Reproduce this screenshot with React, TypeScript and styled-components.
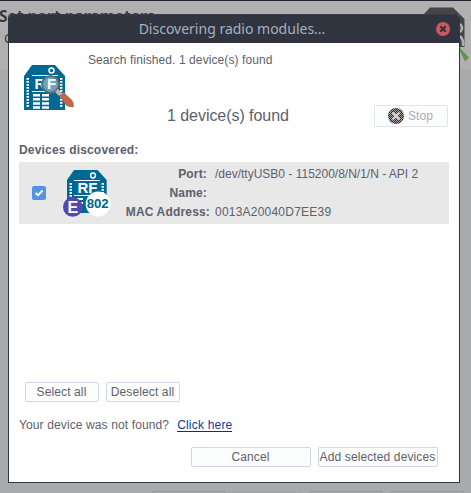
import React from "react";
import styled, { createGlobalStyle } from "styled-components";

const GlobalStyle = createGlobalStyle`
  * { box-sizing: border-box; }
  body {
    margin: 0;
    overflow: hidden;
    font: 12px/14px "Liberation Sans", Arial, sans-serif;
    letter-spacing: 0.09px;
    color: #5c616c;
  }
  svg { display: block; flex: none; letter-spacing: 0; }
`;

const Screen = styled.div`
  position: relative;
  display: flex;
  flex-direction: column;
  width: 471px;
  height: 493px;
  overflow: hidden;
  background: #a9aaac;
`;

const WizardHeader = styled.header`
  display: flex;
  justify-content: space-between;
  height: 69px;
  border-top: 1px solid #22222f;
  background: #b1b0b0;
  color: #34373d;
`;

const WizardTitle = styled.h1`
  margin: 4px 0 0 -1px;
  font: bold 15.5px/22px "Noto Sans", sans-serif;
  letter-spacing: 0;
  white-space: nowrap;
`;

const WizardHint = styled.p`
  margin: 3px 0 0 4px;
  font: 13px/16px "Noto Sans", sans-serif;
`;

const WizardFooter = styled.footer`
  display: grid;
  grid-template-columns: 76px 81px 81px 74px;
  margin: auto 0 0 152px;
  height: 2px;
`;

const FooterEdge = styled.div<{ $faint?: boolean }>`
  width: 74px;
  height: 4px;
  border: 1px solid ${(p) => (p.$faint ? "#a1a2a5" : "#929498")};
  border-radius: 2px;
`;

const Dialog = styled.section`
  position: absolute;
  left: 8px;
  top: 14px;
  width: 452px;
  height: 469px;
  display: flex;
  flex-direction: column;
  border: 1px solid #33363c;
  border-top: 0;
  border-radius: 4px 4px 0 0;
  background: #fff;
  overflow: hidden;
`;

const TitleBar = styled.div`
  display: grid;
  grid-template-columns: 24px 1fr 24px;
  flex: none;
  height: 29px;
  margin: 0 -1px;
  border-top: 1px solid #3b3d42;
  background: #2f343f;
  color: #a9b1c1;
  font: 14px/27px "Noto Sans", sans-serif;
  letter-spacing: 0;
  text-align: center;
`;

const TitleText = styled.span`
  grid-column: 2;
  margin-right: 4px;
  white-space: nowrap;
`;

const CloseButton = styled.div`
  padding-top: 7px;
`;

const Body = styled.div`
  display: flex;
  flex-direction: column;
  flex: 1;
  padding: 0 10px;
`;

const Intro = styled.div`
  display: flex;
  height: 58px;
  padding: 10px 0 0 4px;
`;

const IntroText = styled.p`
  margin: 0 0 0 13px;
`;

const IntroIcon = styled.div`
  padding-top: 12px;
`;

const StatusRow = styled.div`
  display: grid;
  grid-template-columns: 148px 1fr 74px;
  align-items: center;
  height: 30px;
  padding-right: 1px;
`;

const StatusText = styled.strong`
  font-weight: 400;
  font-size: 16px;
  line-height: 20px;
  letter-spacing: -0.05px;
`;

const Button = styled.button<{ $width: number; $muted?: boolean }>`
  display: flex;
  align-items: center;
  justify-content: center;
  gap: 4px;
  width: ${(p) => p.$width}px;
  height: ${(p) => (p.$muted ? 22 : 20)}px;
  padding: 0 1px 0 0;
  border: 1px solid ${(p) => (p.$muted ? "#e1e5ee" : "#cfd6e6")};
  border-radius: 2px;
  background: #fcfdfd;
  color: ${(p) => (p.$muted ? "#a9acb2" : "#5c616c")};
  font: 12px/14px "Liberation Sans", Arial, sans-serif;
  letter-spacing: 0.12px;
  white-space: nowrap;
`;

const SectionLabel = styled.h2`
  margin: 12px 0 5px;
  font-size: 12px;
  line-height: 14px;
  letter-spacing: 0.18px;
`;

const DeviceList = styled.div`
  height: 220px;
`;

const DeviceRow = styled.div`
  display: flex;
  height: 62px;
  background: #e8e8e8;
`;

const Check = styled.div`
  display: flex;
  align-items: center;
  justify-content: center;
  width: 14px;
  height: 14px;
  margin: 24px 17px 0 13px;
  border-radius: 2px;
  background: #5294e2;
`;

const DeviceIconSlot = styled.div`
  padding-top: 8px;
`;

const Details = styled.dl`
  display: grid;
  grid-template-columns: 99px auto;
  grid-auto-rows: 19px;
  margin: 5px 0 0;
`;

const Term = styled.dt<{ $flush?: boolean }>`
  padding-right: ${(p) => (p.$flush ? 0 : 3)}px;
  font-weight: 700;
  letter-spacing: 0.17px;
  text-align: right;
  white-space: nowrap;
`;

const Value = styled.dd<{ $spacing?: number }>`
  margin: 0 0 0 5px;
  letter-spacing: ${(p) => p.$spacing ?? 0}px;
  white-space: nowrap;
`;

const SelectionRow = styled.div`
  display: flex;
  gap: 7px;
  padding-left: 6px;
`;

const HelpRow = styled.div`
  display: flex;
  gap: 8px;
  margin-top: 16px;
  letter-spacing: 0.12px;
`;

const HelpLink = styled.a`
  height: 14px;
  color: #0a3a9c;
  letter-spacing: 0.2px;
  border-bottom: 1px solid #0a2f8c;
`;

const Actions = styled.div`
  display: flex;
  justify-content: flex-end;
  gap: 7px;
  margin-top: 15px;
  padding-right: 11px;
`;

const dots = (height: number) =>
  Array.from({ length: Math.floor(height / 3) }, (_, i) => i * 3);

const SearchModuleIcon = () => (
  <svg width="52" height="46" viewBox="0 0 52 46">
    <path d="M9 0H32L42 11V45H1V11Z" fill="#006894" />
    <circle cx="28.5" cy="5.6" r="2.5" fill="none" stroke="#fff" strokeWidth="1.5" />
    <path d="M9 10.5H35M9 26.5H22" stroke="#fff" />
    {dots(31).map((y) => (
      <path key={y} d={`M3.5 ${13 + y}h2.5v1.7H3.5zM37 ${13 + y}h2.5v1.7h-2.5z`} fill="#fff" />
    ))}
    <text x="11.5" y="24" fill="#fff" fontSize="15" fontWeight="700">R</text>
    <path d="M10 30.2h7M19 30.2h7M10 34.3h7M19 34.3h7M10 38.4h7M19 38.4h7M10 42.4h7M19 42.4h7" stroke="#fff" strokeWidth="2.5" />
    <circle cx="27.5" cy="19.3" r="8.4" fill="#69a5c2" stroke="#67696c" strokeWidth="2" />
    <text x="24" y="24.3" fill="#fff" fontSize="15" fontWeight="700">F</text>
    <path d="M33.5 25.5l4 4" stroke="#b7b9ba" strokeWidth="4" />
    <path d="M36.5 31l4-4 8.5 8q2.5 3 1.9 7-4.5.8-8-1.8Z" fill="#be694a" />
  </svg>
);

const DeviceIcon = () => (
  <svg width="48" height="49" viewBox="0 0 48 49">
    <path d="M11 0H34.5L43.7 10V43H4V10Z" fill="#006894" />
    <circle cx="30" cy="5.5" r="2.4" fill="none" stroke="#fff" strokeWidth="1.5" />
    <path d="M11 10.5H37M11 25.5H37" stroke="#fff" />
    {dots(25).map((y) => (
      <path key={y} d={`M6.5 ${13 + y}h2.5v1.7H6.5zM38.5 ${13 + y}h2.5v1.7H38.5z`} fill="#fff" />
    ))}
    <text x="14.5" y="23" fill="#fff" fontSize="15" fontWeight="700">RF</text>
    <path d="M14 29h6M14 33h6" stroke="#fff" strokeWidth="2" />
    <circle cx="35.2" cy="34" r="12.5" fill="#fff" />
    <text x="23.7" y="38.4" fill="#006489" fontSize="13.2" fontWeight="700">802</text>
    <circle cx="9.8" cy="37" r="9.8" fill="#5648ac" />
    <text x="4.4" y="42.8" fill="#fff" fontSize="16" fontWeight="700">E</text>
  </svg>
);

const StopIcon = () => (
  <svg width="16" height="16" viewBox="0 0 16 16">
    <defs>
      <pattern id="checker" width="2" height="2" patternUnits="userSpaceOnUse">
        <path d="M0 0h1v1H0zM1 1h1v1H1z" fill="#a9a3a3" shapeRendering="crispEdges" />
        <path d="M1 0h1v1H1zM0 1h1v1H0z" fill="#4c1715" shapeRendering="crispEdges" />
      </pattern>
    </defs>
    <circle cx="8" cy="8" r="8" fill="url(#checker)" />
    <path d="M4.5 4.5l7 7M11.5 4.5l-7 7" stroke="#d7d9da" strokeWidth="2.2" />
  </svg>
);

const CloseIcon = () => (
  <svg width="14" height="14" viewBox="0 0 14 14">
    <circle cx="7" cy="7" r="7" fill="#cc575d" />
    <path d="M4.3 4.3l5.4 5.4M9.7 4.3l-5.4 5.4" stroke="#2f343f" strokeWidth="2" />
  </svg>
);

const WizardIcon = () => (
  <svg width="50" height="68" viewBox="421 1 50 68">
    <path d="M423 15L430 7.5H453L464.5 19V47H423Z" fill="#444547" />
    <path d="M460 24q4 4 0 8M460 36q4 4 3 10" fill="none" stroke="#b1b0b0" strokeWidth="2.5" />
    <path d="M457 45L465 61.5 469 57.5 458 46Z" fill="#5f964a" />
  </svg>
);

export default function App() {
  return (
    <>
      <GlobalStyle />
      <Screen>
        <WizardHeader>
          <div>
            <WizardTitle>Set port parameters</WizardTitle>
            <WizardHint>C</WizardHint>
          </div>
          <WizardIcon />
        </WizardHeader>
        <WizardFooter>
          <FooterEdge />
          <FooterEdge $faint />
          <FooterEdge />
          <FooterEdge />
        </WizardFooter>

        <Dialog role="dialog">
          <TitleBar>
            <TitleText>Discovering radio modules...</TitleText>
            <CloseButton>
              <CloseIcon />
            </CloseButton>
          </TitleBar>
          <Body>
            <Intro>
              <IntroIcon>
                <SearchModuleIcon />
              </IntroIcon>
              <IntroText>Search finished. 1 device(s) found</IntroText>
            </Intro>
            <StatusRow>
              <span />
              <StatusText>1 device(s) found</StatusText>
              <Button $width={74} $muted disabled>
                <StopIcon />
                Stop
              </Button>
            </StatusRow>
            <SectionLabel>Devices discovered:</SectionLabel>
            <DeviceList>
              <DeviceRow>
                <Check role="checkbox" aria-checked="true">
                  <svg width="10" height="10" viewBox="0 0 10 10">
                    <path d="M1.5 5L4 7.2 8.6 2.5" fill="none" stroke="#fff" strokeWidth="2" />
                  </svg>
                </Check>
                <DeviceIconSlot>
                  <DeviceIcon />
                </DeviceIconSlot>
                <Details>
                  <Term>Port:</Term>
                  <Value>/dev/ttyUSB0 - 115200/8/N/1/N - API 2</Value>
                  <Term>Name:</Term>
                  <Value />
                  <Term $flush>MAC Address:</Term>
                  <Value $spacing={0.22}>0013A20040D7EE39</Value>
                </Details>
              </DeviceRow>
            </DeviceList>
            <SelectionRow>
              <Button $width={74}>Select all</Button>
              <Button $width={74}>Deselect all</Button>
            </SelectionRow>
            <HelpRow>
              <span>Your device was not found?</span>
              <HelpLink>Click here</HelpLink>
            </HelpRow>
            <Actions>
              <Button $width={120}>Cancel</Button>
              <Button $width={120}>Add selected devices</Button>
            </Actions>
          </Body>
        </Dialog>
      </Screen>
    </>
  );
}
